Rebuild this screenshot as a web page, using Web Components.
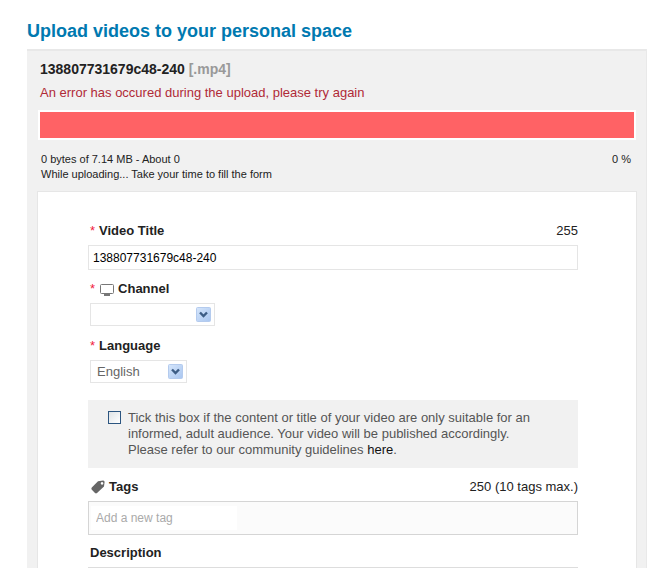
<!DOCTYPE html>
<html lang="en">
<head>
<meta charset="utf-8">
<meta name="viewport" content="width=device-width, initial-scale=1">
<title>Upload videos</title>
<style>
  html {
    overflow: hidden;
  }

  body {
    margin: 0;
    background: #ffffff;
    color: #222222;
    font-family: "Liberation Sans", Arial, sans-serif;
    font-size: 13px;
  }
</style>
</head>
<body>
<upload-page>
  <span slot="heading">Upload videos to your personal space</span>
  <upload-status name="138807731679c48-240" type="[.mp4]" percent="0">
    <span slot="message">An error has occured during the upload, please try again</span>
    <span slot="progress">0 bytes of 7.14 MB - About 0</span>
    <span slot="hint">While uploading... Take your time to fill the form</span>
  </upload-status>
  <video-form></video-form>
</upload-page>

<script>
/**
 * Page shell: heading above a grey panel
 */
class UploadPage extends HTMLElement {
  constructor() {
    super();
    this.attachShadow({ mode: 'open' });
  }

  connectedCallback() {
    this.shadowRoot.innerHTML = `
      <style>
        :host {
          display: flex;
          flex-direction: column;
          box-sizing: border-box;
          height: 100vh;
          overflow: hidden;
          padding: 19px 2px 0 27px;
        }

        h1 {
          margin: 0 0 6px;
          color: #0079b0;
          font-size: 18px;
          line-height: 24px;
        }

        .panel {
          flex: none;
          padding: 8px 9px 10px 10px;
          border-top: 2px solid #e8e8e8;
          border-right: 1px solid #e9e9e9;
          background: #f1f1f1;
        }
      </style>

      <h1><slot name="heading"></slot></h1>
      <main class="panel"><slot></slot></main>
    `;
  }
}

/**
 * File name, message, progress bar and transfer figures
 */
class UploadStatus extends HTMLElement {
  constructor() {
    super();
    this.attachShadow({ mode: 'open' });
  }

  connectedCallback() {
    this.shadowRoot.innerHTML = `
      <style>
        :host {
          display: block;
          margin-bottom: 9px;
        }

        h2 {
          margin: 0;
          padding-left: 3px;
          font-size: 14px;
          line-height: 20px;
        }

        h2 span {
          color: #999999;
        }

        .message {
          margin: 0 0 3px;
          padding: 4px 3px;
          color: #b02a37;
          line-height: 20px;
        }

        .bar {
          height: 26px;
          margin: 0 1px;
          border: 2px solid #ffffff;
          background: #ff6265;
        }

        .figures {
          display: flex;
          justify-content: space-between;
          padding: 12px 6px 0 4px;
          font-size: 11px;
          line-height: 15px;
        }

        .figures p {
          margin: 0;
        }
      </style>

      <h2>${this.getAttribute('name')} <span>${this.getAttribute('type')}</span></h2>
      <p class="message" role="alert"><slot name="message"></slot></p>
      <div class="bar" role="progressbar" aria-valuenow="${this.getAttribute('percent')}"></div>
      <div class="figures">
        <div>
          <p><slot name="progress"></slot></p>
          <p><slot name="hint"></slot></p>
        </div>
        <p>${this.getAttribute('percent')} %</p>
      </div>
    `;
  }
}

/**
 * One row of the form: label, optional note at the right, control below
 */
class FormField extends HTMLElement {
  constructor() {
    super();
    this.attachShadow({ mode: 'open' });
  }

  connectedCallback() {
    const star = this.hasAttribute('required') ? '<span class="star">*</span>' : '';

    this.shadowRoot.innerHTML = `
      <style>
        :host {
          display: block;
        }

        .head {
          display: flex;
          align-items: center;
          gap: 4px;
          padding-left: 2px;
          line-height: 18px;
          margin-bottom: 5px;
        }

        .star {
          color: #f0203c;
        }

        .note {
          margin-left: auto;
        }
      </style>

      <div class="head">
        ${star}
        <slot name="icon"></slot>
        <slot name="label"></slot>
        <span class="note"><slot name="note"></slot></span>
      </div>
      <slot></slot>
    `;
  }
}

/**
 * Frame and blue arrow around a native select
 */
class SelectBox extends HTMLElement {
  constructor() {
    super();
    this.attachShadow({ mode: 'open' });
  }

  connectedCallback() {
    this.shadowRoot.innerHTML = `
      <style>
        :host {
          display: inline-block;
          position: relative;
          margin-left: 2px;
          border: 1px solid #e5e5e5;
          vertical-align: top;
        }

        svg {
          position: absolute;
          top: 3px;
          right: 3px;
          pointer-events: none;
        }
      </style>

      <slot></slot>
      <svg width="15" height="15" viewBox="0 0 15 15" aria-hidden="true">
        <defs>
          <linearGradient id="face" x1="0" y1="0" x2="1" y2="1">
            <stop offset="0" stop-color="#d6e6fb"/>
            <stop offset="1" stop-color="#a9c6f0"/>
          </linearGradient>
        </defs>
        <rect x="0.5" y="0.5" width="14" height="14" rx="1" fill="url(#face)" stroke="#b4cbee"/>
        <path d="M4 5.5 7.5 9 11 5.5" fill="none" stroke="#3d5d85" stroke-width="2.4"/>
      </svg>
    `;
  }
}

class VideoForm extends HTMLElement {
  constructor() {
    super();
    this.attachShadow({ mode: 'open' });
  }

  connectedCallback() {
    this.shadowRoot.innerHTML = `
      <style>
        :host {
          display: block;
          border: 1px solid #e6e6e6;
          background: #ffffff;
        }

        form {
          display: flex;
          flex-direction: column;
          padding: 30px 58px 30px 50px;
        }

        label {
          font-weight: bold;
        }

        input,
        select,
        textarea {
          box-sizing: border-box;
          margin: 0;
          font: inherit;
          color: inherit;
        }

        .text {
          display: block;
          width: 100%;
          height: 25px;
          padding: 0 4px;
          border: 1px solid #e5e5e5;
          color: #000000;
          font-size: 12px;
        }

        select {
          display: block;
          height: 21px;
          padding: 0 24px 0 6px;
          border: 0;
          appearance: none;
          background: transparent;
          color: #666666;
        }

        #channel {
          width: 123px;
        }

        #language {
          width: 95px;
        }

        .title {
          margin-bottom: 10px;
        }

        .channel {
          margin-bottom: 11px;
        }

        .language {
          margin-bottom: 17px;
        }

        .adult {
          display: flex;
          gap: 7px;
          margin-bottom: 10px;
          padding: 10px 20px;
          background: #f1f1f1;
          color: #555555;
        }

        .adult input {
          flex: none;
          width: 13px;
          height: 13px;
          margin-top: 1px;
          appearance: none;
          border: 1px solid #2c5580;
          background: linear-gradient(135deg, #dfe3e6, #ffffff);
        }

        .adult input:checked {
          background: #2c5580;
        }

        .adult label {
          max-width: 410px;
          font-weight: normal;
          line-height: 16px;
        }

        .adult a {
          color: #111111;
          text-decoration: none;
        }

        .tagbox {
          padding: 4px 2px;
          border: 1px solid #d5d5d5;
          background: #fbfbfb;
        }

        .tagbox input {
          display: block;
          width: 146px;
          height: 24px;
          padding: 0 5px;
          border: 0;
          background: #ffffff;
          font-size: 12px;
        }

        ::placeholder {
          color: #aaaaaa;
          opacity: 1;
        }

        .tags {
          margin-bottom: 9px;
        }

        textarea {
          display: block;
          width: 100%;
          height: 90px;
          border: 1px solid #dddddd;
          resize: vertical;
        }
      </style>

      <form>
        <form-field class="title" required>
          <label slot="label" for="title">Video Title</label>
          <span slot="note">255</span>
          <input class="text" id="title" type="text" value="138807731679c48-240">
        </form-field>

        <form-field class="channel" required>
          <svg slot="icon" width="15" height="13" viewBox="0 0 15 13" aria-hidden="true">
            <rect x="1.5" y="1.5" width="13" height="9" rx="1" fill="#ffffff" stroke="#777777"/>
            <path d="M5 12h6" stroke="#777777" stroke-width="2"/>
          </svg>
          <label slot="label" for="channel">Channel</label>
          <select-box>
            <select id="channel"><option></option></select>
          </select-box>
        </form-field>

        <form-field class="language" required>
          <label slot="label" for="language">Language</label>
          <select-box>
            <select id="language"><option>English</option></select>
          </select-box>
        </form-field>

        <div class="adult">
          <input id="adult" type="checkbox">
          <label for="adult">Tick this box if the content or title of your video are only suitable for an informed, adult audience. Your video will be published accordingly.<br>Please refer to our community guidelines <a href="#guidelines">here</a>.</label>
        </div>

        <form-field class="tags">
          <svg slot="icon" width="15" height="14" viewBox="0 0 15 14" aria-hidden="true">
            <path fill="#666666" fill-rule="evenodd" d="M8 1.3 13.2 0.5Q14.6 0.6 14.6 2L14 6.5 7 13Q6 13.8 5 13L1.6 9.6Q1 8.6 1.8 7.6ZM12 2.1a1.3 1.3 0 1 0 0.1 0Z"/>
          </svg>
          <label slot="label" for="tags">Tags</label>
          <span slot="note">250 (10 tags max.)</span>
          <div class="tagbox">
            <input id="tags" type="text" placeholder="Add a new tag">
          </div>
        </form-field>

        <form-field>
          <label slot="label" for="description">Description</label>
          <textarea id="description"></textarea>
        </form-field>
      </form>
    `;
  }
}

// Register the web components
customElements.define('form-field', FormField);
customElements.define('select-box', SelectBox);
customElements.define('video-form', VideoForm);
customElements.define('upload-status', UploadStatus);
customElements.define('upload-page', UploadPage);
</script>
</body>
</html>
